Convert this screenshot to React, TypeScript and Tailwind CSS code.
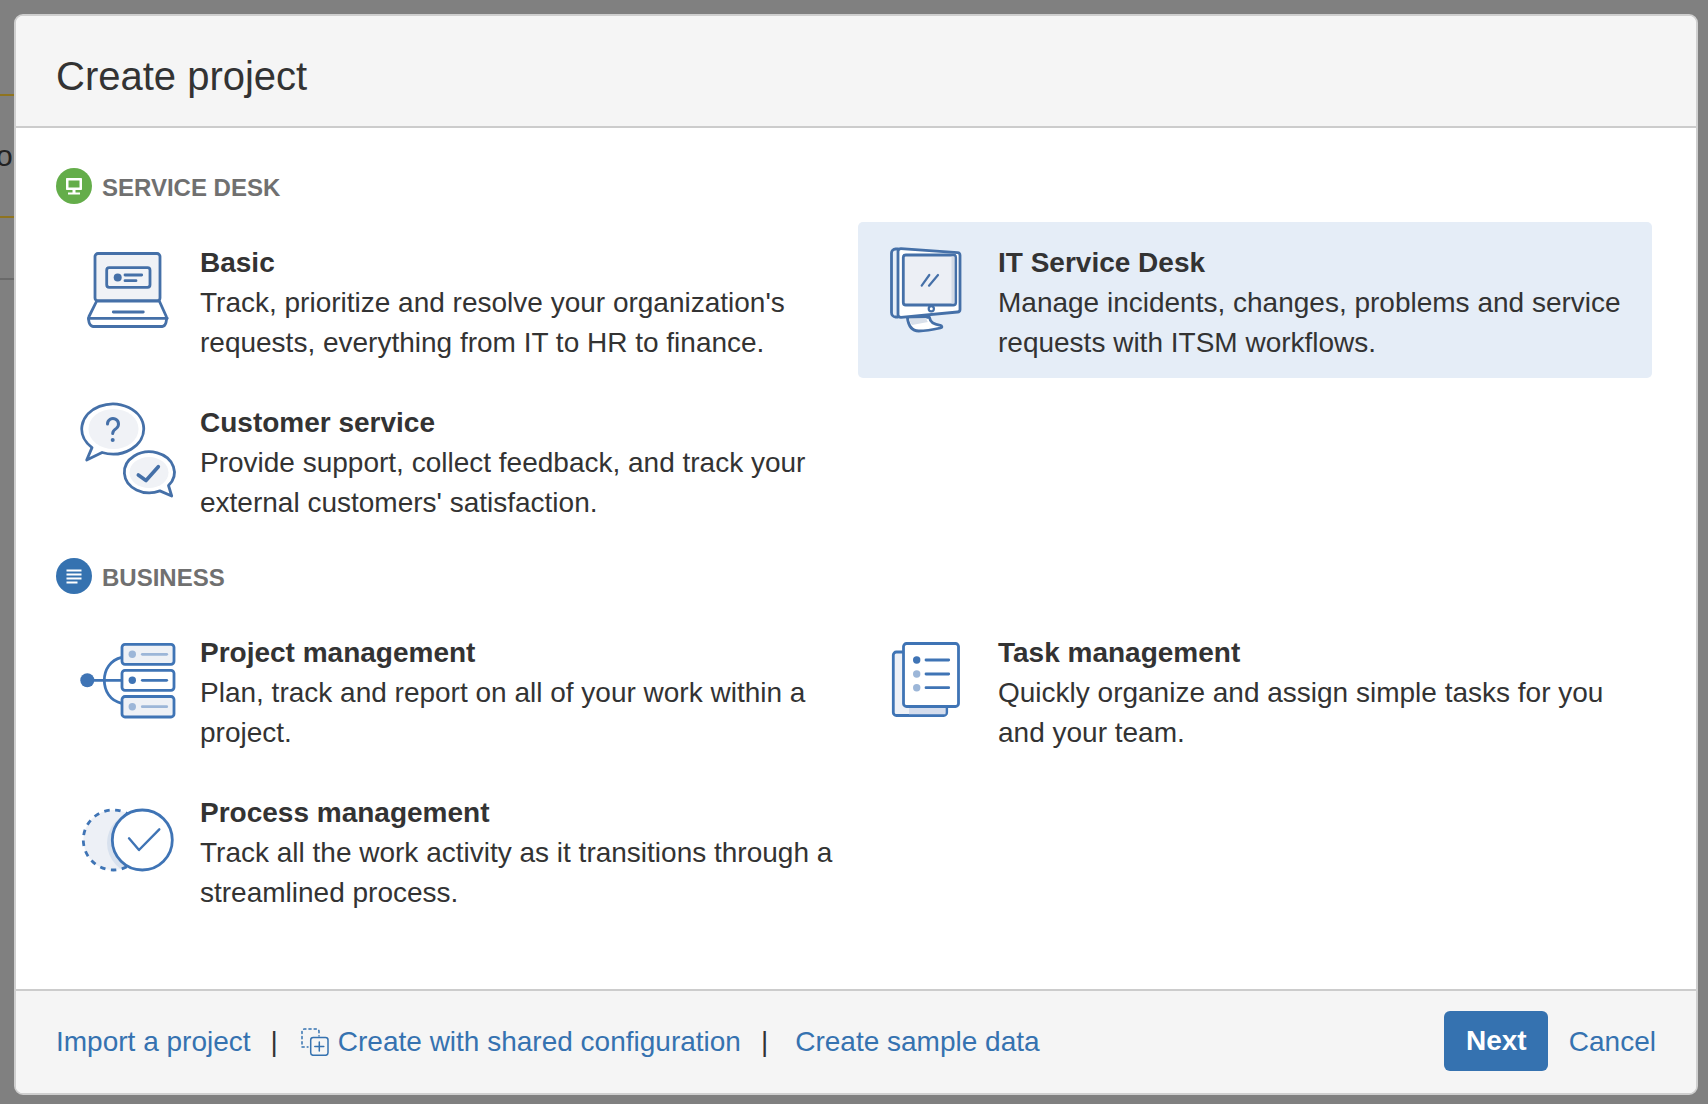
import type { ReactNode } from 'react';

const STROKE = '#4570a8';
const SOFT = '#f0f2f6';

function BasicIcon() {
  return (
    <svg viewBox="0 0 110 110" className="h-[110px] w-[110px]" fill="none" stroke={STROKE} strokeWidth="2.800" strokeLinecap="round" strokeLinejoin="round">
      <rect x="19" y="13.500" width="65" height="47.500" rx="3" fill={SOFT} />
      <rect x="30.700" y="27.700" width="43.300" height="19.600" rx="2.500" fill="#fff" fillOpacity="0.1" />
      <circle cx="41.700" cy="37.500" r="4" fill={STROKE} stroke="none" />
      <path d="M49 35h16.700M49 40.700h11" />
      <path d="M20.700 61h62.600l7 15.500c1 3-.5 10-4 10H17c-3.500 0-5.500-7-4-10z" fill="#fff" />
      <path d="M12.500 78.300h78.800M37.300 72h30" />
    </svg>
  );
}

function CustomerIcon() {
  return (
    <svg viewBox="0 0 110 110" className="h-[110px] w-[110px]" fill="none" stroke={STROKE} strokeWidth="2.800" strokeLinecap="round" strokeLinejoin="round">
      <path d="M16 47.600A31 25 0 1 1 26.100 52.500L10.700 60Z" fill="#fff" />
      <ellipse cx="37.500" cy="29" rx="25" ry="20" fill={SOFT} stroke="none" />
      <path d="M31.500 24a5.500 5.500 0 1 1 8.800 4.400c-2.400 1.700-3.600 2.700-3.600 5" strokeWidth="3" />
      <circle cx="36.700" cy="40" r="2" fill={STROKE} stroke="none" />
      <path d="M92.500 85.500A25 20.500 0 1 0 83.900 90.900L95.700 96Z" fill="#fff" />
      <ellipse cx="73" cy="72.500" rx="19.500" ry="15.500" fill={SOFT} stroke="none" />
      <path d="M62.300 75l7.700 5.500 12.300-13.800" strokeWidth="3.600" />
    </svg>
  );
}

function ItIcon() {
  return (
    <svg viewBox="0 0 110 110" className="h-[110px] w-[110px]" fill="none" stroke={STROKE} strokeWidth="2.800" strokeLinecap="round" strokeLinejoin="round">
      <path d="M33.300 77c1 9 5 14 11.500 14 7 0 15-1.500 21.500-3 2.500-.8 1.500-2.300 0-2.700-7-1-10.300-3.500-10.800-8z" fill="#fff" />
      <path d="M35 78.500c.5 2.500 1.500 4.500 3 6.500l16-3c-1-1-1.500-2.500-1.500-4z" fill="#d9e0ea" stroke="none" />
      <path d="M24 9h-2.500c-2.200 0-4 1.800-4 4v59.500c0 2.500 1.800 4.500 4 4.500H24" fill="#e6eef8" />
      <path d="M27 8.700l56.500 4c1.500.1 2.500 1.200 2.500 2.700v54c0 1.500-1 2.500-2.500 2.600L27 77.300c-1.600.1-3-1.100-3-2.700V11.500c0-1.600 1.400-2.900 3-2.800z" fill="#fff" />
      <rect x="29.300" y="15" width="52.400" height="50" rx="2.500" fill="#eceff5" />
      <path d="M77.500 16.500h3v47h-3z" fill="#d4dbe6" stroke="none" />
      <path d="M47.700 45.700L55.300 35M55 45.700L64 35" strokeWidth="2.200" />
      <circle cx="57.300" cy="68.700" r="2.600" fill="#fff" strokeWidth="2.200" />
    </svg>
  );
}

function ProjectIcon() {
  return (
    <svg viewBox="0 0 110 110" className="h-[110px] w-[110px]" fill="none" stroke="#3f74b5" strokeWidth="2.800" strokeLinecap="round" strokeLinejoin="round">
      <circle cx="11.300" cy="50.300" r="7" fill="#3f74b5" stroke="none" />
      <path d="M11.300 50.300H46M45.700 27.300C34 30 28.300 40 28.300 50.300S34 71 45.700 73.300" />
      <rect x="46" y="14.300" width="52" height="20" rx="3" fill="#eef1f6" />
      <circle cx="56.300" cy="24.300" r="3.700" fill="#9cb6d8" stroke="none" />
      <path d="M66.300 24.300h24.400" stroke="#9cb6d8" />
      <rect x="46" y="40.300" width="52" height="20" rx="3" fill="#fff" />
      <circle cx="56.300" cy="50.300" r="3.700" fill="#3f74b5" stroke="none" />
      <path d="M66.300 50.300h24.400" />
      <rect x="46" y="66.500" width="52" height="20.500" rx="3" fill="#eef1f6" />
      <circle cx="56.300" cy="76.700" r="3.700" fill="#9cb6d8" stroke="none" />
      <path d="M66.300 76.700h24.400" stroke="#9cb6d8" />
    </svg>
  );
}

function TaskIcon() {
  return (
    <svg viewBox="0 0 110 110" className="h-[110px] w-[110px]" fill="none" stroke="#3f74b5" strokeWidth="2.800" strokeLinecap="round" strokeLinejoin="round">
      <rect x="19.300" y="22" width="53.400" height="63.500" rx="3" fill="#eef1f7" />
      <path d="M35 77h36.500v7.300H35z" fill="#d5dded" stroke="none" />
      <rect x="29.500" y="13.500" width="55" height="63" rx="3" fill="#fff" />
      <circle cx="42.700" cy="30" r="3.700" fill="#3f74b5" stroke="none" />
      <circle cx="42.700" cy="44" r="3.700" fill="#9cb6d8" stroke="none" />
      <circle cx="42.700" cy="57.700" r="3.700" fill="#9cb6d8" stroke="none" />
      <path d="M52 30h22.700M52 44h22.700M52 57.700h22.700" />
    </svg>
  );
}

function ProcessIcon() {
  return (
    <svg viewBox="0 0 110 110" className="h-[110px] w-[110px]" fill="none" stroke="#3f74b5" strokeWidth="2.800" strokeLinecap="round" strokeLinejoin="round">
      <defs>
        <clipPath id="dashed-clip">
          <circle cx="37.300" cy="50" r="30" />
        </clipPath>
      </defs>
      <circle cx="37.300" cy="50" r="30" fill="#edf0f6" stroke="none" />
      <circle cx="62" cy="53" r="31" fill="#d8e1ee" stroke="none" clipPath="url(#dashed-clip)" />
      <circle cx="37.300" cy="50" r="30" strokeDasharray="5.500 5.500" strokeLinecap="butt" />
      <circle cx="66.300" cy="50" r="30" fill="#fff" />
      <path d="M53 48.300L63 60l20.300-20.700" strokeWidth="2.400" />
    </svg>
  );
}

function SharedConfigIcon() {
  return (
    <svg viewBox="0 0 28 28" className="h-[28px] w-[28px] shrink-0" fill="none" stroke="#3572b0" strokeWidth="1.500" strokeLinecap="round">
      <path d="M1 16V3.500C1 2 2 1 3.500 1h12C17 1 18 2 18 3.500V8M1 19h6" strokeDasharray="2.200 3" />
      <rect x="9.700" y="9.500" width="17.300" height="17.800" rx="2.500" />
      <path d="M18.300 14v9M13.800 18.500h9" />
    </svg>
  );
}

function ProjectItem({ icon, title, text, active }: { icon: ReactNode; title: string; text: string; active?: boolean }) {
  return (
    <div className={`flex h-[156px] rounded-[5px] py-[18px] pl-4 pr-1 ${active ? 'bg-[#e5edf7]' : ''}`}>
      <div className="mr-[14px] shrink-0">{icon}</div>
      <div className="pt-[3px] text-[28px] leading-[40px] text-[#333]">
        <div className="font-bold">{title}</div>
        <div>{text}</div>
      </div>
    </div>
  );
}

function SectionLabel({ color, label, children }: { color: string; label: string; children: ReactNode }) {
  return (
    <div className="mb-[18px] flex h-9 items-center gap-[10px]">
      <div className={`flex h-9 w-9 items-center justify-center rounded-full ${color}`}>{children}</div>
      <span className="pt-[3px] text-2xl font-bold text-[#707070]">{label}</span>
    </div>
  );
}

export default function App() {
  return (
    <div className="flex h-[1104px] overflow-hidden bg-[#808080] font-['Liberation_Sans',Arial,sans-serif]">
      {/* whatever is behind the modal on the left edge */}
      <div className="h-full w-[14px] shrink-0 overflow-hidden">
        <div className="mt-[94px] h-[2px] bg-[#8f7420]" />
        <div className="-ml-[4px] mt-[42px] h-[36px] text-[30px] leading-[36px] text-[#222]">o</div>
        <div className="mt-[42px] h-[2px] bg-[#8f7420]" />
        <div className="mt-[60px] h-[2px] bg-[#6a6a6a]" />
      </div>

      <div className="mt-[14px] flex h-[1081px] w-[1684px] shrink-0 flex-col overflow-hidden rounded-[9px] border-2 border-[#cfcfcf] bg-white">
        <div className="flex h-[112px] shrink-0 items-center border-b-2 border-[#ccc] bg-[#f5f5f5] px-10 pt-[9px]">
          <h2 className="text-[40px] font-normal text-[#333]">Create project</h2>
        </div>

        <div className="flex-1 px-10 pt-10">
          <SectionLabel color="bg-[#64ad4a]" label="SERVICE DESK">
            <svg viewBox="0 0 20 20" className="h-[20px] w-[20px]" fill="#fff">
              <path d="M3 2h14c.6 0 1 .4 1 1v10c0 .6-.4 1-1 1H3c-.6 0-1-.4-1-1V3c0-.6.4-1 1-1zm1.500 2.500v7h11v-7zM8.500 14h3v2.500h-3zM4 16.500h12V18.500H4z" fillRule="evenodd" />
            </svg>
          </SectionLabel>
          <div className="grid grid-cols-[794px_794px] gap-1 pl-1">
            <ProjectItem icon={<BasicIcon />} title="Basic" text="Track, prioritize and resolve your organization's requests, everything from IT to HR to finance." />
            <ProjectItem active icon={<ItIcon />} title="IT Service Desk" text="Manage incidents, changes, problems and service requests with ITSM workflows." />
            <ProjectItem icon={<CustomerIcon />} title="Customer service" text="Provide support, collect feedback, and track your external customers' satisfaction." />
          </div>

          <div className="mt-5">
            <SectionLabel color="bg-[#3572b0]" label="BUSINESS">
              <svg viewBox="0 0 20 20" className="h-[20px] w-[20px]" fill="#fff">
                <path d="M2.500 3.500h15v2h-15zM2.500 7.500h15v2h-15zM2.500 11.500h15v2h-15zM2.500 15.500h11v2h-11z" />
              </svg>
            </SectionLabel>
          </div>
          <div className="grid grid-cols-[794px_794px] gap-1 pl-1">
            <ProjectItem icon={<ProjectIcon />} title="Project management" text="Plan, track and report on all of your work within a project." />
            <ProjectItem icon={<TaskIcon />} title="Task management" text="Quickly organize and assign simple tasks for you and your team." />
            <ProjectItem icon={<ProcessIcon />} title="Process management" text="Track all the work activity as it transitions through a streamlined process." />
          </div>
        </div>

        <div className="flex h-[104px] shrink-0 items-center border-t-2 border-[#ccc] bg-[#f5f5f5] px-10 text-[28px] text-[#3572b0]">
          <span>Import a project</span>
          <span className="ml-[20px] text-[#333]">|</span>
          <span className="ml-[23px] mr-[9px] flex items-center"><SharedConfigIcon /></span>
          <span>Create with shared configuration</span>
          <span className="ml-[20px] text-[#333]">|</span>
          <span className="ml-[27px]">Create sample data</span>
          <button className="mb-[2px] ml-auto h-[60px] w-[104px] rounded-[6px] bg-[#3572b0] pl-[1px] font-bold text-white">Next</button>
          <span className="ml-[21px]">Cancel</span>
        </div>
      </div>
    </div>
  );
}
